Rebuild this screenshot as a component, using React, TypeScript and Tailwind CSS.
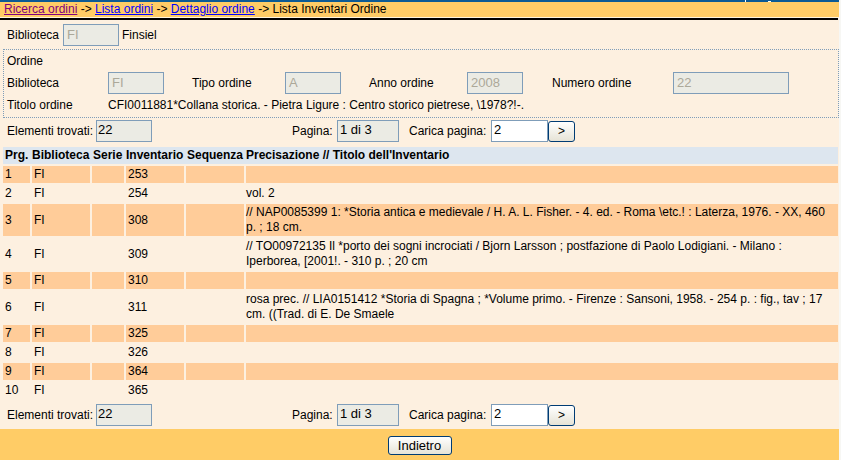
import React from "react";

const rows = [
  { p: "1", inv: "253", t: "" },
  { p: "2", inv: "254", t: "vol. 2" },
  {
    p: "3",
    inv: "308",
    t: "// NAP0085399 1: *Storia antica e medievale / H. A. L. Fisher. - 4. ed. - Roma \\etc.! : Laterza, 1976. - XX, 460 p. ; 18 cm.",
  },
  {
    p: "4",
    inv: "309",
    t: "// TO00972135 Il *porto dei sogni incrociati / Bjorn Larsson ; postfazione di Paolo Lodigiani. - Milano : Iperborea, [2001!. - 310 p. ; 20 cm",
  },
  { p: "5", inv: "310", t: "" },
  {
    p: "6",
    inv: "311",
    t: "rosa prec. // LIA0151412 *Storia di Spagna ; *Volume primo. - Firenze : Sansoni, 1958. - 254 p. : fig., tav ; 17 cm. ((Trad. di E. De Smaele",
  },
  { p: "7", inv: "325", t: "" },
  { p: "8", inv: "326", t: "" },
  { p: "9", inv: "364", t: "" },
  { p: "10", inv: "365", t: "" },
];

function DisabledBox({ value, w }: { value: string; w: string }) {
  return (
    <div
      className={`${w} h-[22px] shrink-0 border border-[#7f9db9] bg-[#ebebe4] text-[#aca899] text-[13px] leading-[20px] pl-[3px] box-border`}
    >
      {value}
    </div>
  );
}

function Pager() {
  return (
    <div className="flex items-center h-[22px]">
      <div className="w-[96px] pl-[7px] box-border shrink-0">Elementi trovati:</div>
      <div className="w-[56px] h-[22px] shrink-0 border border-[#7f9db9] bg-[#ebebe4] text-[13px] leading-[18px] pl-[1px] box-border">
        22
      </div>
      <div className="ml-[140px] w-[45px] shrink-0">Pagina:</div>
      <div className="w-[62px] h-[22px] shrink-0 border border-[#7f9db9] bg-[#ebebe4] text-[13px] leading-[18px] pl-[2px] box-border">
        1 di 3
      </div>
      <div className="ml-[10px] w-[82px] shrink-0">Carica pagina:</div>
      <div className="w-[57px] h-[22px] shrink-0 border border-[#7f9db9] bg-white text-[13px] leading-[18px] pl-[2px] box-border">
        2
      </div>
      <div className="w-[27px] h-[21px] shrink-0 border border-[#003c74] rounded-[3px] bg-gradient-to-b from-white to-[#e6e3d6] flex items-center justify-center text-[12px] leading-none box-border">
        &gt;
      </div>
    </div>
  );
}

export default function App() {
  return (
    <div className="w-[841px] h-[460px] bg-[#f7f7f4] overflow-hidden font-['Liberation_Sans',Arial,sans-serif] text-[12px] text-black">
      <div className="w-[839px] h-[460px] bg-[#fdf0e0] flex flex-col">
        {/* top blue strip */}
        <div className="h-[2px] bg-[#0b5a94] relative shrink-0">
          <div className="absolute left-[745px] top-0 w-[1px] h-[2px] bg-white" />
          <div className="absolute left-[768px] top-[1px] w-[3px] h-[1px] bg-white" />
        </div>
        {/* breadcrumb */}
        <div className="h-[15px] bg-[#ffcc66] pl-[4px] leading-[15px] shrink-0 whitespace-nowrap">
          <span className="text-[#800080] underline">Ricerca ordini</span>
          <span> -&gt; </span>
          <span className="text-[#0000ff] underline">Lista ordini</span>
          <span> -&gt; </span>
          <span className="text-[#0000ff] underline">Dettaglio ordine</span>
          <span> -&gt; Lista Inventari Ordine</span>
        </div>
        <div className="h-[1px] bg-[#fff4dc] shrink-0" />
        <div className="h-[2px] w-[838px] bg-black shrink-0" />

        {/* Biblioteca row */}
        <div className="mt-[4px] h-[22px] flex items-center shrink-0">
          <div className="w-[63px] pl-[7px] box-border shrink-0">Biblioteca</div>
          <DisabledBox value="FI" w="w-[56px]" />
          <div className="ml-[3px]">Finsiel</div>
        </div>

        {/* Ordine box */}
        <div className="mt-[3px] ml-[3px] w-[836px] h-[69px] shrink-0 border border-dotted border-[#7f9db9] box-border pl-[3px] flex flex-col">
          <div className="mt-[2px] h-[18px] leading-[18px]">Ordine</div>
          <div className="mt-[2px] h-[22px] flex items-center">
            <div className="w-[101px] shrink-0">Biblioteca</div>
            <DisabledBox value="FI" w="w-[56px]" />
            <div className="ml-[28px] w-[93px] shrink-0">Tipo ordine</div>
            <DisabledBox value="A" w="w-[56px]" />
            <div className="ml-[28px] w-[98px] shrink-0">Anno ordine</div>
            <DisabledBox value="2008" w="w-[56px]" />
            <div className="ml-[29px] w-[121px] shrink-0">Numero ordine</div>
            <DisabledBox value="22" w="w-[116px]" />
          </div>
          <div className="h-[21px] flex items-center">
            <div className="w-[101px] shrink-0">Titolo ordine</div>
            <div className="whitespace-nowrap">
              CFI0011881*Collana storica. - Pietra Ligure : Centro storico pietrese, \1978?!-.
            </div>
          </div>
        </div>

        {/* pager top */}
        <div className="mt-[2px] shrink-0">
          <Pager />
        </div>

        {/* table */}
        <div className="mt-[5px] ml-[3px] w-[835px] flex flex-col gap-[2px] shrink-0">
          <div className="h-[17px] bg-[#dde6ef] grid grid-cols-[27px_58px_32px_58px_58px_1fr] gap-x-[2px] font-bold leading-[17px] whitespace-nowrap">
            <div className="pl-[2px]">Prg.</div>
            <div>Biblioteca</div>
            <div className="pl-[1px]">Serie</div>
            <div>Inventario</div>
            <div className="pl-[1px]">Sequenza</div>
            <div>Precisazione // Titolo dell'Inventario</div>
          </div>
          {rows.map((r, i) => {
            const bg = i % 2 === 0 ? "bg-[#ffcc99]" : "";
            const cell = `${bg} pl-[2px] pt-[1px] pb-[1px] leading-[15px] flex items-center`;
            return (
              <div
                key={r.p}
                className="grid grid-cols-[27px_58px_32px_58px_58px_1fr] gap-x-[2px]"
              >
                <div className={cell}>{r.p}</div>
                <div className={cell}>FI</div>
                <div className={cell}></div>
                <div className={cell}>{r.inv}</div>
                <div className={cell}></div>
                <div className={`${bg} pl-[0px] pt-[1px] pb-[1px] leading-[15px]`}>{r.t}</div>
              </div>
            );
          })}
        </div>

        {/* pager bottom */}
        <div className="mt-[5px] shrink-0">
          <Pager />
        </div>

        {/* footer */}
        <div className="mt-[3px] h-[31px] bg-[#ffcc66] flex justify-center pt-[7px] box-border shrink-0">
          <div className="w-[64px] h-[19px] border border-[#003c74] rounded-[3px] bg-gradient-to-b from-white to-[#e6e3d6] flex items-center justify-center text-[13px] leading-none box-border">
            Indietro
          </div>
        </div>
      </div>
    </div>
  );
}
